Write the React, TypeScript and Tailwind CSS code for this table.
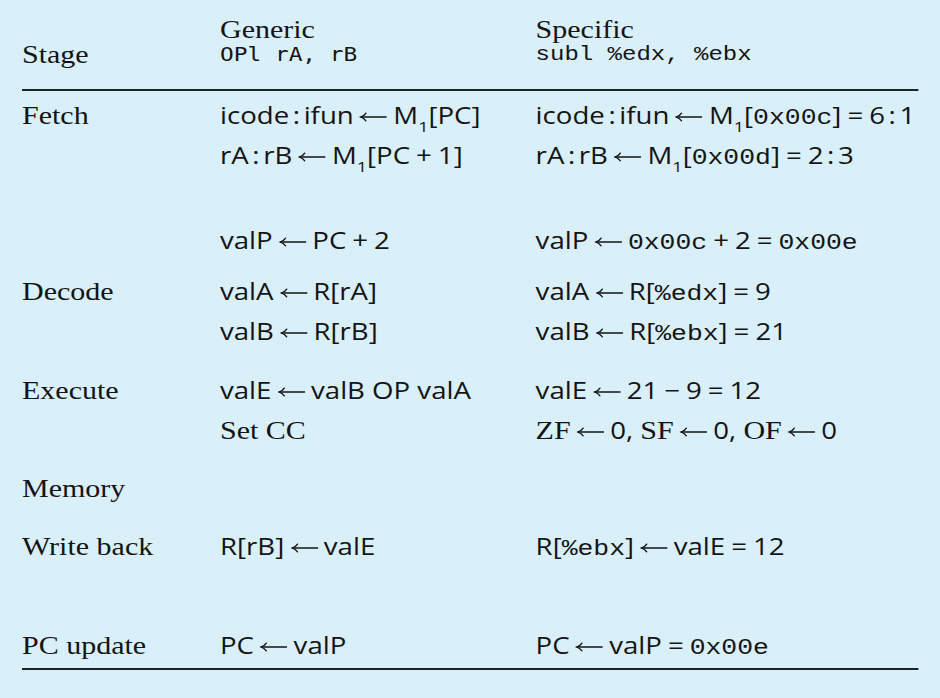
import type { ReactNode } from 'react';

// little font helpers for the mixed typesetting
const Serif = ({ children }: { children: ReactNode }) => (
  <span className="font-['Liberation_Serif',serif] text-[25px]">{children}</span>
);
const Tt = ({ children }: { children: ReactNode }) => (
  <span className="font-['Liberation_Mono',monospace] text-[22px]">{children}</span>
);
// long math-style left arrow
const Arrow = () => (
  <svg
    width="23"
    height="10"
    viewBox="0 0 23 10"
    className="inline-block mx-[5px] align-[2px]"
    fill="none"
    stroke="#141414"
    strokeWidth="1.3"
    strokeLinecap="round"
  >
    <path d="M22.5 5H1.5" />
    <path d="M5.5 1.2Q4.2 3.8 1.2 5Q4.2 6.2 5.5 8.8" />
  </svg>
);
const Op = ({ children }: { children: ReactNode }) => <span className="mx-[5px]">{children}</span>;
const Colon = () => <span className="mx-[3px]">:</span>;
const Sub = ({ children }: { children: ReactNode }) => (
  <sub className="text-[15px] align-[-4px]">{children}</sub>
);

interface RowProps {
  stage?: ReactNode;
  generic?: ReactNode;
  specific?: ReactNode;
  className?: string;
}

function Row({ stage, generic, specific, className = '' }: RowProps) {
  return (
    <div className={`flex items-baseline h-[40px] leading-[40px] ${className}`}>
      <div className="w-[165px] shrink-0 font-['Liberation_Serif',serif] text-[25px]">{stage ?? '\u00a0'}</div>
      <div className="w-[263px] shrink-0 whitespace-nowrap">{generic ?? '\u00a0'}</div>
      <div className="whitespace-nowrap">{specific ?? '\u00a0'}</div>
    </div>
  );
}

export default function App() {
  return (
    <div className="w-[940px] h-[698px] overflow-hidden bg-[#d9effa] text-[#141414] font-['Open_Sans',sans-serif] text-[23px] pl-[22px] pt-[17px]">
      {/* the page is set a bit wide, so stretch the whole table */}
      <div className="w-[747px] origin-left scale-x-[1.2]">
        {/* Header */}
        <div className="flex leading-[25px]">
          <div className="w-[165px] shrink-0 flex flex-col">
            <span>&nbsp;</span>
            <Serif>Stage</Serif>
          </div>
          <div className="w-[263px] shrink-0 flex flex-col">
            <Serif>Generic</Serif>
            <span className="font-['DejaVu_Sans_Mono',monospace] text-[19px]">OPl rA, rB</span>
          </div>
          <div className="flex flex-col">
            <Serif>Specific</Serif>
            <span className="font-['Liberation_Mono',monospace] text-[20px]">subl %edx, %ebx</span>
          </div>
        </div>
        <div className="h-[2px] bg-[#1c2329] mt-[22px]" />

        {/* Body */}
        <Row
          className="mt-[4px]"
          stage="Fetch"
          generic={<>icode<Colon />ifun<Arrow />M<Sub>1</Sub>[PC]</>}
          specific={<>icode<Colon />ifun<Arrow />M<Sub>1</Sub>[<Tt>0x00c</Tt>]<Op>=</Op>6<Colon />1</>}
        />
        <Row
          generic={<>rA<Colon />rB<Arrow />M<Sub>1</Sub>[PC<Op>+</Op>1]</>}
          specific={<>rA<Colon />rB<Arrow />M<Sub>1</Sub>[<Tt>0x00d</Tt>]<Op>=</Op>2<Colon />3</>}
        />
        <Row
          className="mt-[45px]"
          generic={<>valP<Arrow />PC<Op>+</Op>2</>}
          specific={<>valP<Arrow /><Tt>0x00c</Tt><Op>+</Op>2<Op>=</Op><Tt>0x00e</Tt></>}
        />
        <Row
          className="mt-[11px]"
          stage="Decode"
          generic={<>valA<Arrow />R[rA]</>}
          specific={<>valA<Arrow />R[<Tt>%edx</Tt>]<Op>=</Op>9</>}
        />
        <Row
          generic={<>valB<Arrow />R[rB]</>}
          specific={<>valB<Arrow />R[<Tt>%ebx</Tt>]<Op>=</Op>21</>}
        />
        <Row
          className="mt-[19px]"
          stage="Execute"
          generic={<>valE<Arrow />valB OP valA</>}
          specific={<>valE<Arrow />21<Op>−</Op>9<Op>=</Op>12</>}
        />
        <Row
          generic={<Serif>Set CC</Serif>}
          specific={<><Serif>ZF</Serif><Arrow />0, <Serif>SF</Serif><Arrow />0, <Serif>OF</Serif><Arrow />0</>}
        />
        <Row className="mt-[18px]" stage="Memory" />
        <Row
          className="mt-[18px]"
          stage="Write back"
          generic={<>R[rB]<Arrow />valE</>}
          specific={<>R[<Tt>%ebx</Tt>]<Arrow />valE<Op>=</Op>12</>}
        />
        <Row
          className="mt-[59px]"
          stage="PC update"
          generic={<>PC<Arrow />valP</>}
          specific={<>PC<Arrow />valP<Op>=</Op><Tt>0x00e</Tt></>}
        />
        <div className="h-[2px] bg-[#1c2329] mt-[3px]" />
      </div>
    </div>
  );
}
